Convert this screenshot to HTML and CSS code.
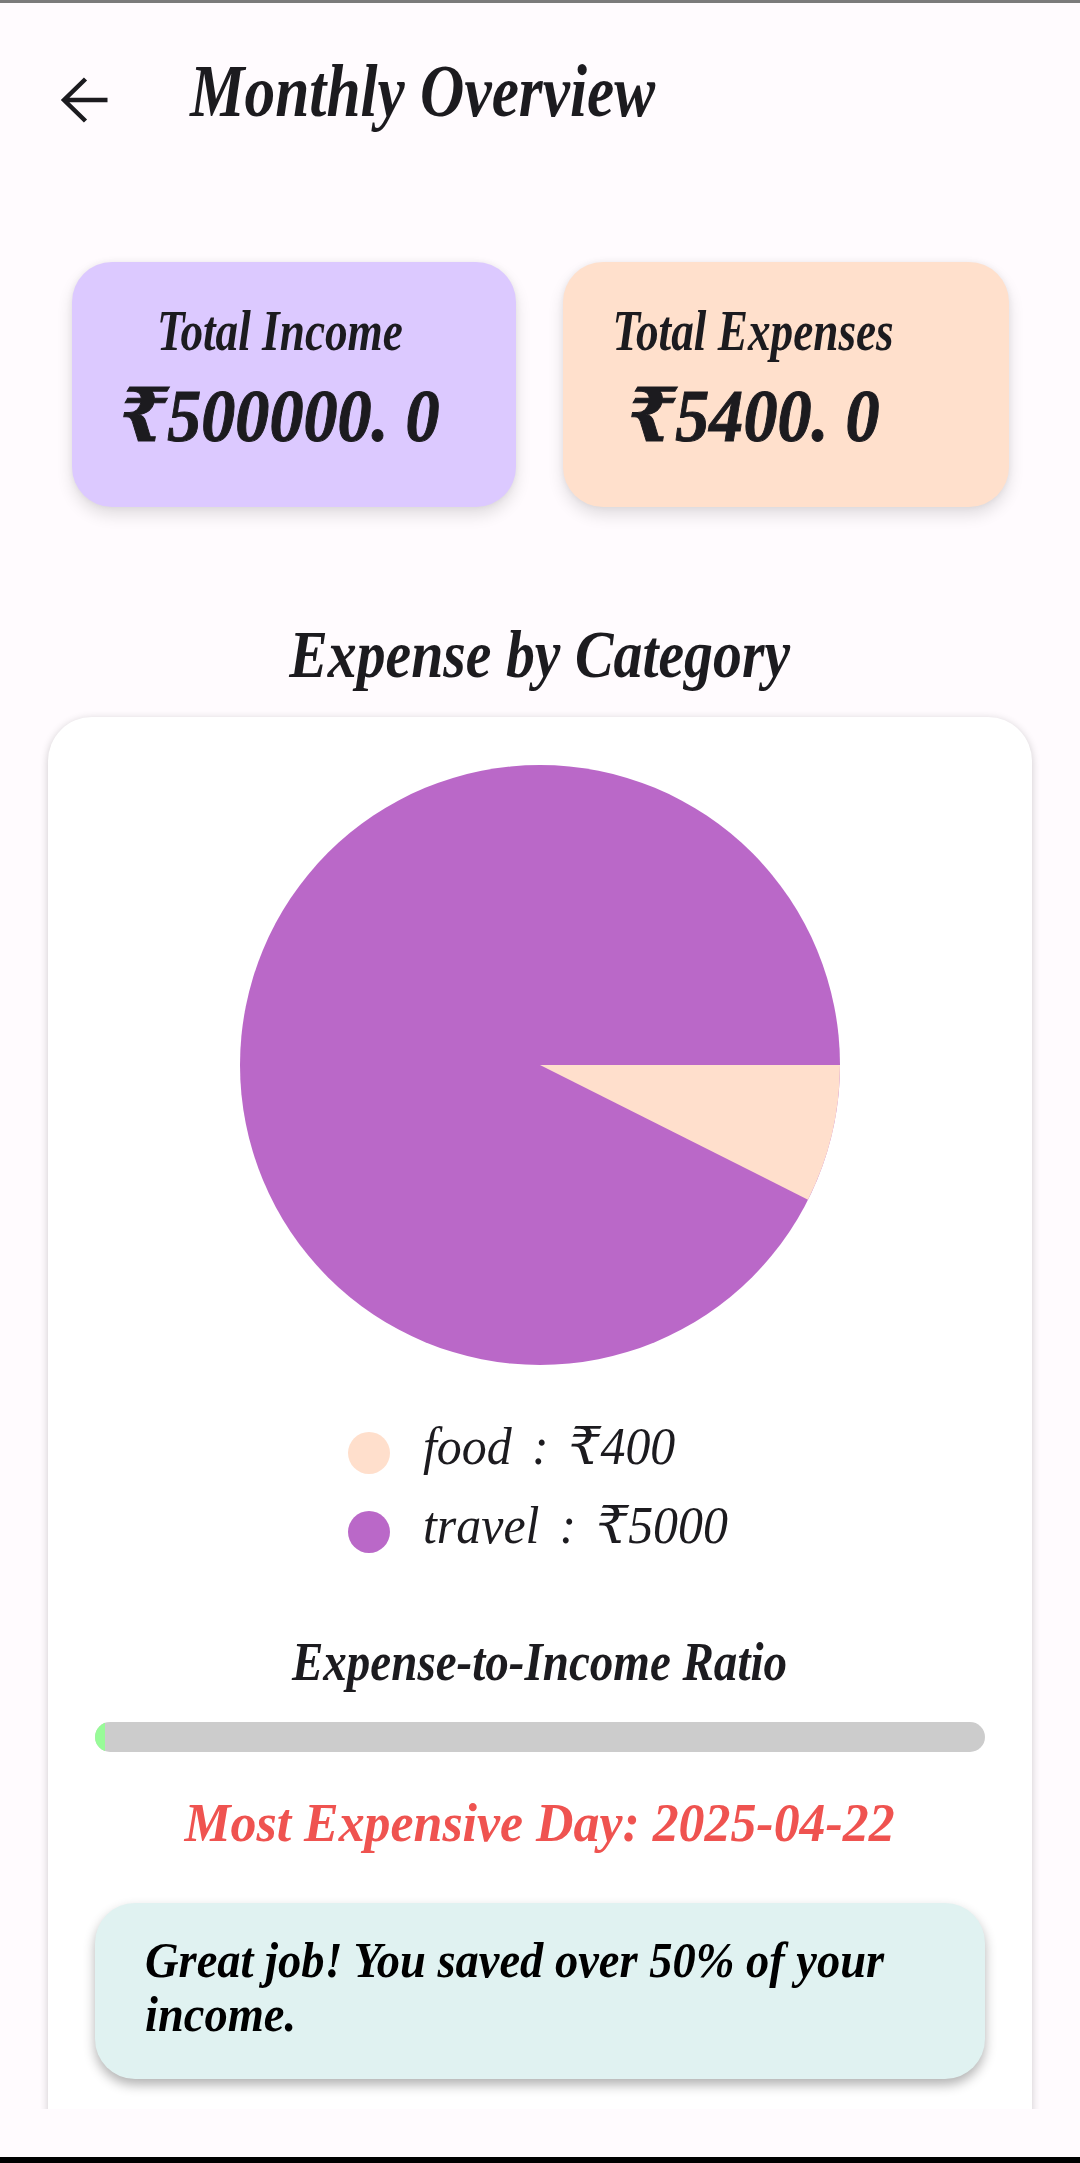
FILE: index.html
```html
<!DOCTYPE html>
<html lang="en">
<head>
<meta charset="utf-8">
<title>Monthly Overview</title>
<link rel="stylesheet" href="styles.css">
</head>
<body>
<div class="screen">
  <div class="status-line"></div>
  <main class="content">
    <header class="appbar">
      <svg class="back" viewBox="0 0 48 46" aria-hidden="true"><path d="M47 23H4M25 2 3.500 23 25 44" fill="none" stroke="#1c1b1f" stroke-width="4.500"/></svg>
      <h1 class="title"><span class="squeeze left t-title">Monthly Overview</span></h1>
    </header>
    <section class="totals">
      <div class="total income">
        <div class="col col-income">
          <span class="squeeze t-label">Total Income</span>
          <span class="squeeze t-value">₹500000. 0</span>
        </div>
      </div>
      <div class="total expenses">
        <div class="col col-expenses">
          <span class="squeeze t-label">Total Expenses</span>
          <span class="squeeze t-value">₹5400. 0</span>
        </div>
      </div>
    </section>
    <h2 class="section-heading"><span class="squeeze t-section">Expense by Category</span></h2>
    <section class="panel">
      <svg class="pie" viewBox="0 0 600 600" aria-hidden="true">
        <circle cx="300" cy="300" r="300" fill="#ba68c8"/>
        <path d="M300 300H600A300 300 0 0 1 568 434.700Z" fill="#ffdfcc"/>
      </svg>
      <ul class="legend">
        <li class="legend-row"><i class="dot dot-food"></i><span class="squeeze left t-legend">food : ₹400</span></li>
        <li class="legend-row"><i class="dot dot-travel"></i><span class="squeeze left t-legend">travel : ₹5000</span></li>
      </ul>
      <h3 class="ratio-heading"><span class="squeeze t-ratio">Expense-to-Income Ratio</span></h3>
      <div class="bar"><div class="bar-fill"></div></div>
      <p class="best-day"><span class="squeeze t-day">Most Expensive Day: 2025-04-22</span></p>
      <div class="tip">
        <p class="tip-line"><span class="squeeze left t-tip">Great job! You saved over 50% of your</span></p>
        <p class="tip-line"><span class="squeeze left t-tip">income.</span></p>
      </div>
    </section>
  </main>
  <div class="bottom-space"></div>
  <div class="bottom-edge"></div>
</div>
</body>
</html>
```
FILE: styles.css
```css
* { box-sizing: border-box; }
html, body { margin: 0; padding: 0; }
body { background: #fffbfe; color: #1c1b1f; font-family: "Liberation Serif", "DejaVu Serif", serif; }
h1, h2, h3, p, ul { margin: 0; padding: 0; font-weight: inherit; font-size: inherit; }
ul { list-style: none; }

.screen { width: 1080px; height: 2163px; display: flex; flex-direction: column; overflow: hidden; }
.status-line { height: 3px; background: #7b7b7b; flex: none; }
.content { height: 2106px; flex: none; overflow: hidden; }
.bottom-space { height: 48px; flex: none; background: #fffbfe; }
.bottom-edge { height: 6px; flex: none; background: #000; }

.squeeze { display: inline-block; white-space: nowrap; font-weight: 700; font-style: italic; transform-origin: center; }
.squeeze.left { transform-origin: left center; }
.t-title { font-size: 74px; line-height: 80px; transform: scaleX(.829); }
.t-label { font-size: 57px; line-height: 60px; transform: scaleX(.794); }
.t-value { font-size: 74px; line-height: 72px; transform: scaleX(.92); -webkit-text-stroke: 1px #1c1b1f; }
.t-section { font-size: 68px; line-height: 70px; transform: scaleX(.85); }
.t-legend { font-size: 52px; line-height: 58px; font-weight: 400; transform: scaleX(.96); word-spacing: 8px; }
.t-ratio { font-size: 55px; line-height: 60px; transform: scaleX(.855); }
.t-day { font-size: 55px; line-height: 60px; transform: scaleX(.943); color: #ef5350; }
.t-tip { font-size: 50px; line-height: 54px; color: #000; transform: scaleX(.93); }

.appbar { height: 190px; display: flex; align-items: flex-start; padding: 48px 0 0 60px; }
.back { width: 49px; height: 46px; margin-top: 26px; flex: none; }
.title { margin-left: 81px; }

.totals { display: flex; gap: 47px; padding: 69px 71px 0 72px; height: 314px; }
.total { height: 245px; border-radius: 40px; padding: 39px 0 0 48px; box-shadow: 0 8px 16px rgba(0,0,0,.12), 0 0 6px rgba(0,0,0,.06); }
.income { width: 444px; background: #dcc9ff; }
.expenses { width: 446px; background: #ffe0cc; }
.col { display: flex; flex-direction: column; align-items: center; gap: 19px; }
.col-income { width: 320px; }
.col-expenses { width: 285px; padding: 0; }

.section-heading { height: 210px; padding-top: 112px; text-align: center; line-height: 70px; }

.panel { margin: 0 48px; height: 1500px; background: #fff; border-radius: 44px; padding: 48px 47px 0; box-shadow: 0 2px 8px rgba(0,0,0,.2); display: flex; flex-direction: column; }
.pie { width: 600px; height: 600px; align-self: center; flex: none; }
.legend { margin: 47px 0 0 253px; display: flex; flex-direction: column; gap: 0; }
.legend-row { display: flex; align-items: flex-start; height: 79px; }
.dot { width: 42px; height: 42px; border-radius: 50%; flex: none; margin-top: 20px; }
.dot-food { background: #ffdfcc; }
.dot-travel { background: #ba68c8; }
.t-legend { margin: 6px 0 0 33px; }
.ratio-heading { text-align: center; margin-top: 62px; height: 60px; }
.bar { height: 30px; margin-top: 30px; border-radius: 15px; background: #ccc; overflow: hidden; flex: none; }
.bar-fill { width: 10px; height: 100%; background: #98fb98; }
.best-day { text-align: center; margin-top: 41px; height: 60px; }
.tip { margin-top: 50px; height: 176px; border-radius: 40px; background: #e0f2f1; padding: 30px 50px 0; box-shadow: 0 6px 12px rgba(0,0,0,.3); flex: none; }
```
